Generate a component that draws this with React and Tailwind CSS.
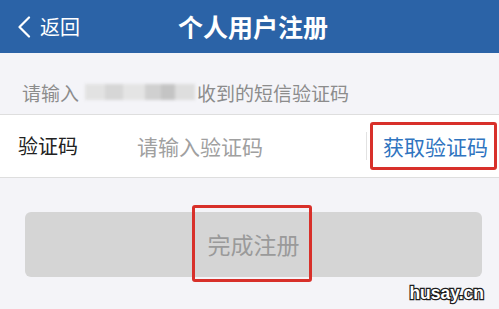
export default function App() {
  return (
    <div className="relative w-[499px] h-[309px] overflow-hidden bg-[#f4f4f8] font-['Noto_Sans_CJK_SC','Noto_Sans',sans-serif]">
      {/* 顶部导航 */}
      <div className="relative h-[53px] bg-[#2b63a7] flex items-center">
        <div className="flex items-center pl-[17px] text-white">
          <svg width="14" height="22" viewBox="0 0 14 22" fill="none">
            <polyline points="12,1.5 2.5,11 12,20.5" stroke="white" strokeWidth="2.2" strokeLinecap="round" strokeLinejoin="round" />
          </svg>
          <span className="ml-[9px] text-[20px] leading-none">返回</span>
        </div>
        <div className="absolute left-0 right-0 top-0 h-full flex items-center justify-center pointer-events-none">
          <span className="ml-[7px] text-white text-[25px] font-bold leading-none">个人用户注册</span>
        </div>
      </div>

      {/* 提示 */}
      <div className="h-[61px] pt-[17px] pl-[22px] flex items-center text-[19px] text-[#8c8c8c] leading-none">
        <span>请输入</span>
        <span className="flex items-center h-[16px] w-[110px] ml-[6px] mr-[2px] blur-[1.5px]">
          <span className="h-full w-[20px] bg-[#e2e2e2]" />
          <span className="h-full w-[18px] bg-[#d6d6d6]" />
          <span className="h-full w-[22px] bg-[#e4e4e4]" />
          <span className="h-full w-[16px] bg-[#d0d0d0]" />
          <span className="h-full w-[14px] bg-[#c4c4c4]" />
          <span className="h-full w-[20px] bg-[#dedede]" />
        </span>
        <span>收到的短信验证码</span>
      </div>

      {/* 验证码行 */}
      <div className="h-[64px] bg-white border-y border-[#dedede] flex items-center">
        <span className="pl-[18px] w-[137px] text-[20px] text-[#222] leading-none">验证码</span>
        <span className="flex-1 text-[21px] text-[#a0a0a0] leading-none">请输入验证码</span>
        <span className="w-px h-[28px] bg-[#e2e2e2] mr-[3px]" />
        <span className="mr-[2px] h-[48px] pl-[10px] pr-[6px] flex items-center border-[3px] border-[#d8302a] rounded-[3px] text-[21px] text-[#2f74bf] leading-none">
          获取验证码
        </span>
      </div>

      {/* 完成注册 */}
      <div className="relative mt-[34px] ml-[25px] mr-[17px]">
        <div className="h-[65px] rounded-[6px] bg-[#d5d5d5] flex items-center justify-center">
          <span className="text-[23px] text-[#9a9a9a] leading-none">完成注册</span>
        </div>
        <div className="absolute left-[167px] top-[-7px] w-[120px] h-[77px] border-[3px] border-[#d8302a] rounded-[3px]" />
      </div>

      {/* 水印 */}
      <span className="absolute right-[15px] top-[280px] text-[17.5px] font-bold text-white font-['Liberation_Sans',sans-serif] [-webkit-text-stroke:2.5px_#1e1e1e] [paint-order:stroke_fill]">
        husay.cn
      </span>
    </div>
  );
}
